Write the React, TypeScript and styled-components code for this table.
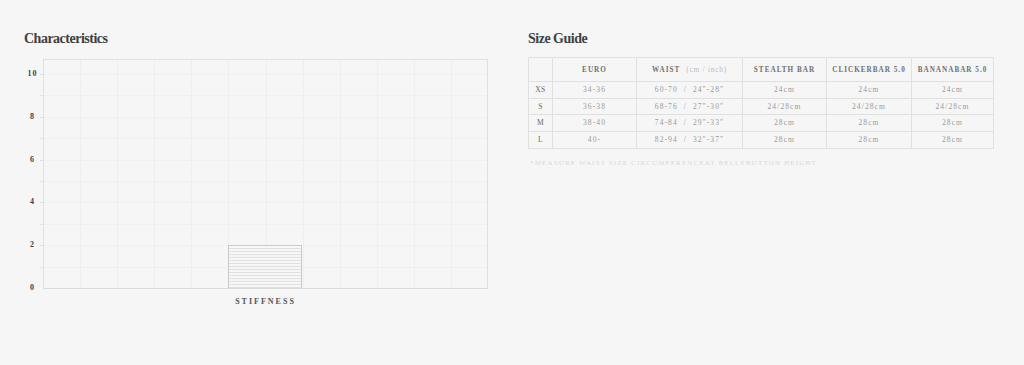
import React from "react";
import styled, { createGlobalStyle } from "styled-components";

const GlobalStyle = createGlobalStyle`
  html, body {
    margin: 0;
    padding: 0;
    background: #f6f6f6;
  }
  body {
    font-family: "Liberation Serif", "Times New Roman", serif;
    color: #555;
  }
`;

const Page = styled.div`
  display: grid;
  grid-template-columns: 464px 465px;
  column-gap: 40px;
  padding: 31px 0 0 24px;
  min-height: 334px;
`;

const Section = styled.section`
  display: flex;
  flex-direction: column;
`;

const Title = styled.h2`
  margin: 0;
  font-family: "Liberation Serif", "Times New Roman", serif;
  font-size: 14px;
  line-height: 16px;
  font-weight: 700;
  letter-spacing: -0.5px;
  color: #404040;
`;

/* ---------- Chart ---------- */

const ChartRow = styled.div`
  display: flex;
  align-items: flex-start;
  margin-top: 12px;
`;

const YAxis = styled.div`
  width: 15px;
  padding: 10px 0 0 2px;
  display: flex;
  flex-direction: column;
  gap: 32.8px;
`;

const YLabel = styled.span`
  display: block;
  height: 10px;
  line-height: 10px;
  font-size: 8px;
  font-weight: 700;
  letter-spacing: 1px;
  text-align: center;
  color: #444;
`;

const PlotSvg = styled.svg`
  display: block;
  flex: none;
`;

const XAxis = styled.div`
  display: flex;
  justify-content: center;
  width: 445px;
  margin: 4px 0 0 19px;
`;

const XLabel = styled.span`
  font-size: 8px;
  line-height: 10px;
  font-weight: 700;
  letter-spacing: 2px;
  color: #555;
`;

const PLOT_W = 445;
const PLOT_H = 230;
const UNIT = 21.4;
const COLS = 12;

const Plot: React.FC<{ value: number }> = ({ value }) => {
  const base = PLOT_H - 1;
  const hLines = Array.from({ length: 10 }, (_, i) => Math.round(base - (i + 1) * UNIT) + 0.5);
  const vLines = Array.from({ length: COLS - 1 }, (_, i) => Math.round(((i + 1) * PLOT_W) / COLS) + 0.5);
  const colW = PLOT_W / COLS;
  const barX = Math.round(PLOT_W / 2 - colW) + 0.5;
  const barW = Math.round(colW * 2) - 1;
  const barTop = Math.round(base - value * UNIT) + 0.5;
  return (
    <PlotSvg width={PLOT_W + 4} height={PLOT_H} viewBox={`-4 0 ${PLOT_W + 4} ${PLOT_H}`}>
      <defs>
        <pattern id="stripes" width="4" height="3" patternUnits="userSpaceOnUse">
          <rect width="4" height="3" fill="#f7f7f7" />
          <rect width="4" height="1" fill="#e0e0e0" />
        </pattern>
      </defs>
      {hLines.map((y) => (
        <line key={`h${y}`} x1={0} x2={PLOT_W} y1={y} y2={y} stroke="#f0f0f0" strokeWidth={1} />
      ))}
      {vLines.map((x) => (
        <line key={`v${x}`} x1={x} x2={x} y1={0} y2={PLOT_H} stroke="#efefef" strokeWidth={1} />
      ))}
      {hLines.map((y, i) => (
        <line key={`t${y}`} x1={-3} x2={0} y1={y} y2={y} stroke={i % 2 === 0 ? "#e6e6e6" : "#dedede"} strokeWidth={1} />
      ))}
      <rect x={0.5} y={0.5} width={PLOT_W - 1} height={PLOT_H - 1} fill="none" stroke="#e0e0e0" strokeWidth={1} />
      <rect x={barX} y={barTop} width={barW} height={base + 0.5 - barTop} fill="url(#stripes)" stroke="#c9c9c9" strokeWidth={1} />
      <line x1={0} x2={PLOT_W} y1={base + 0.5} y2={base + 0.5} stroke="#dadada" strokeWidth={1} />
    </PlotSvg>
  );
};

/* ---------- Table ---------- */

const Table = styled.table`
  margin-top: 10px;
  width: 465px;
  border-collapse: collapse;
  table-layout: fixed;
  border: 1px solid #dcdcdc;
`;

const HeadCell = styled.th`
  height: 23px;
  padding: 0;
  border: 1px solid #e0e0e0;
  font-size: 7.2px;
  font-weight: 700;
  letter-spacing: 1px;
  color: #707070;
  text-align: center;
  vertical-align: middle;
  white-space: nowrap;
  overflow: hidden;
`;

const Unit = styled.span`
  font-weight: 400;
  font-size: 7.5px;
  letter-spacing: 0.7px;
  color: #bbb;
  margin-left: 6px;
`;

const Cell = styled.td<{ $size?: boolean }>`
  height: 15.7px;
  padding: 0;
  border: 1px solid #e0e0e0;
  font-size: 7.5px;
  line-height: 10px;
  letter-spacing: ${(p) => (p.$size ? "0.5px" : "1.1px")};
  color: ${(p) => (p.$size ? "#666" : "#999")};
  text-align: center;
  vertical-align: middle;
  white-space: pre;
`;

const Note = styled.p`
  margin: 9px 0 0 2px;
  font-size: 7px;
  line-height: 10px;
  letter-spacing: 1.15px;
  color: #d8d8d8;
`;

const columns = [
  { key: "size", w: 24, label: "" },
  { key: "euro", w: 84, label: "EURO" },
  { key: "waist", w: 106, label: "WAIST" },
  { key: "stealth", w: 84, label: "STEALTH BAR" },
  { key: "clicker", w: 85, label: "CLICKERBAR 5.0" },
  { key: "banana", w: 82, label: "BANANABAR 5.0" },
];

const rows = [
  ["XS", "34-36", "60-70  /  24\"-28\"", "24cm", "24cm", "24cm"],
  ["S", "36-38", "68-76  /  27\"-30\"", "24/28cm", "24/28cm", "24/28cm"],
  ["M", "38-40", "74-84  /  29\"-33\"", "28cm", "28cm", "28cm"],
  ["L", "40-", "82-94  /  32\"-37\"", "28cm", "28cm", "28cm"],
];

export default function App() {
  return (
    <>
      <GlobalStyle />
      <Page>
        <Section>
          <Title>Characteristics</Title>
          <ChartRow>
            <YAxis>
              {["10", "8", "6", "4", "2", "0"].map((l) => (
                <YLabel key={l}>{l}</YLabel>
              ))}
            </YAxis>
            <Plot value={2} />
          </ChartRow>
          <XAxis>
            <XLabel>STIFFNESS</XLabel>
          </XAxis>
        </Section>
        <Section>
          <Title>Size Guide</Title>
          <Table>
            <colgroup>
              {columns.map((c) => (
                <col key={c.key} style={{ width: c.w }} />
              ))}
            </colgroup>
            <thead>
              <tr>
                {columns.map((c) => (
                  <HeadCell key={c.key}>
                    {c.label}
                    {c.key === "waist" && <Unit>(cm / inch)</Unit>}
                  </HeadCell>
                ))}
              </tr>
            </thead>
            <tbody>
              {rows.map((r) => (
                <tr key={r[0]}>
                  {r.map((v, i) => (
                    <Cell key={i} $size={i === 0}>
                      {v}
                    </Cell>
                  ))}
                </tr>
              ))}
            </tbody>
          </Table>
          <Note>*MEASURE WAIST SIZE CIRCUMFERENCEAT BELLYBUTTON HEIGHT</Note>
        </Section>
      </Page>
    </>
  );
}
